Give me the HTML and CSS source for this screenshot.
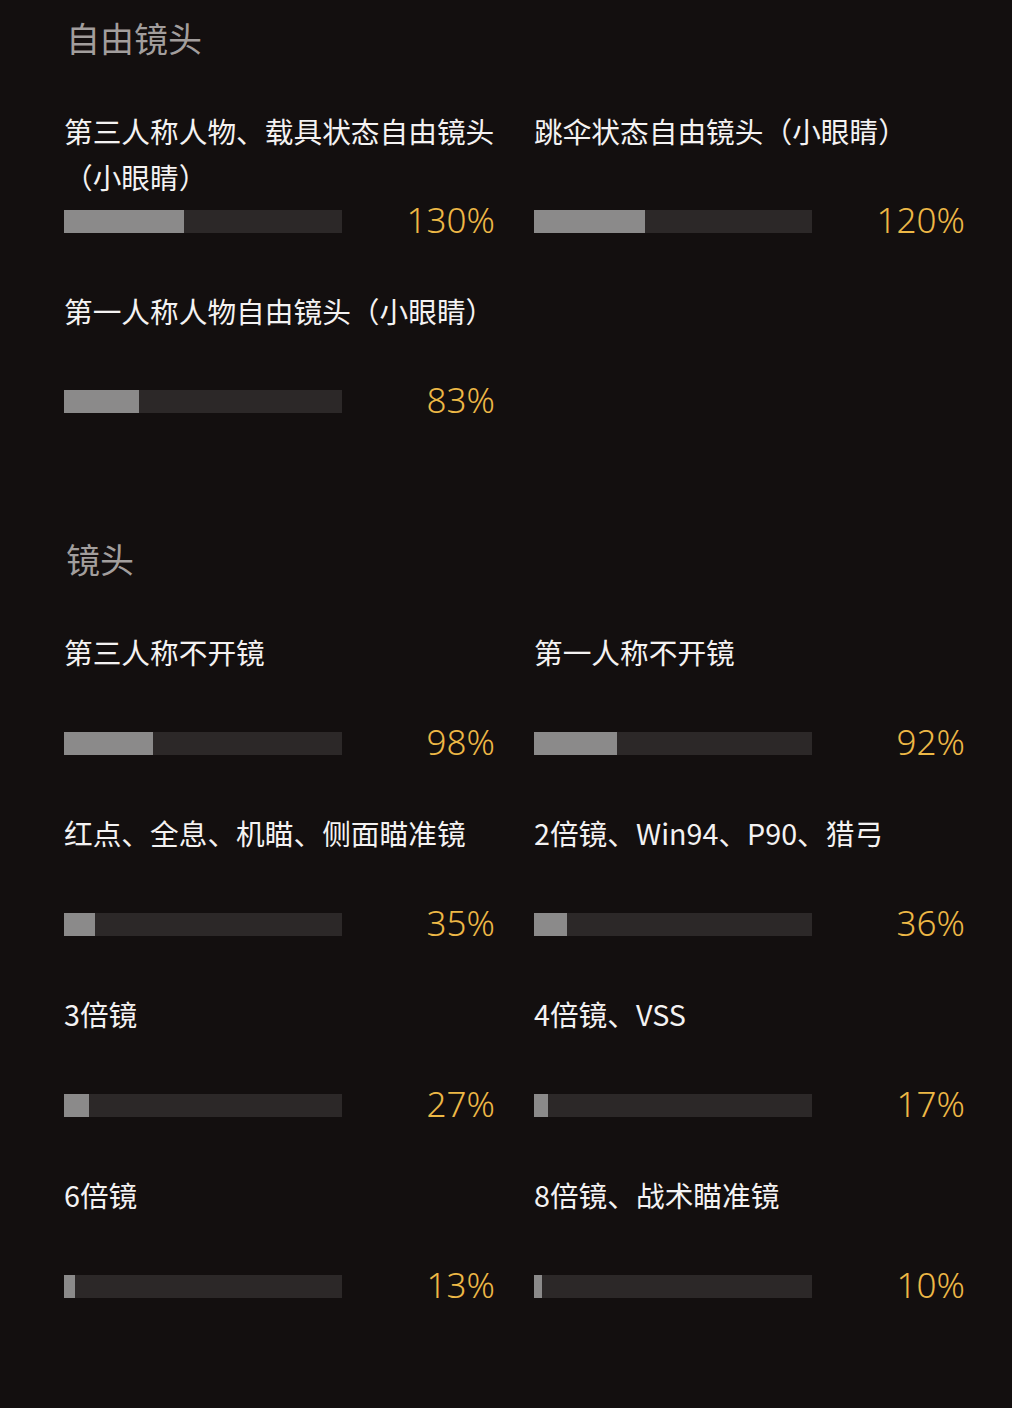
FILE: index.html
```html
<!DOCTYPE html>
<html lang="zh-CN">
<head>
<meta charset="utf-8">
<title>灵敏度 - 镜头</title>
<link rel="stylesheet" href="styles.css">
</head>
<body>
<main class="page">
  <section class="group">
    <h2 class="group-title">自由镜头</h2>
    <div class="grid">
      <div class="item">
        <div class="label">第三人称人物、载具状态自由镜头（小眼睛）</div>
        <div class="meter"><div class="track"><div class="fill" style="width:43.3%"></div></div><span class="value">130%</span></div>
      </div>
      <div class="item">
        <div class="label">跳伞状态自由镜头（小眼睛）</div>
        <div class="meter"><div class="track"><div class="fill" style="width:40%"></div></div><span class="value">120%</span></div>
      </div>
      <div class="item">
        <div class="label">第一人称人物自由镜头（小眼睛）</div>
        <div class="meter"><div class="track"><div class="fill" style="width:27%"></div></div><span class="value">83%</span></div>
      </div>
    </div>
  </section>

  <section class="group group-next">
    <h2 class="group-title">镜头</h2>
    <div class="grid">
      <div class="item">
        <div class="label">第三人称不开镜</div>
        <div class="meter"><div class="track"><div class="fill" style="width:32%"></div></div><span class="value">98%</span></div>
      </div>
      <div class="item">
        <div class="label">第一人称不开镜</div>
        <div class="meter"><div class="track"><div class="fill" style="width:30%"></div></div><span class="value">92%</span></div>
      </div>
      <div class="item">
        <div class="label">红点、全息、机瞄、侧面瞄准镜</div>
        <div class="meter"><div class="track"><div class="fill" style="width:11.2%"></div></div><span class="value">35%</span></div>
      </div>
      <div class="item">
        <div class="label">2倍镜、Win94、P90、猎弓</div>
        <div class="meter"><div class="track"><div class="fill" style="width:12%"></div></div><span class="value">36%</span></div>
      </div>
      <div class="item">
        <div class="label">3倍镜</div>
        <div class="meter"><div class="track"><div class="fill" style="width:9%"></div></div><span class="value">27%</span></div>
      </div>
      <div class="item">
        <div class="label">4倍镜、VSS</div>
        <div class="meter"><div class="track"><div class="fill" style="width:5%"></div></div><span class="value">17%</span></div>
      </div>
      <div class="item">
        <div class="label">6倍镜</div>
        <div class="meter"><div class="track"><div class="fill" style="width:4%"></div></div><span class="value">13%</span></div>
      </div>
      <div class="item">
        <div class="label">8倍镜、战术瞄准镜</div>
        <div class="meter"><div class="track"><div class="fill" style="width:3%"></div></div><span class="value">10%</span></div>
      </div>
    </div>
  </section>
</main>
</body>
</html>
```

FILE: styles.css
```css
html, body {
  margin: 0;
  padding: 0;
  background: #130f0f;
}

body {
  font-family: "Noto Sans CJK SC", "Noto Sans", sans-serif;
  color: #f2f0f0;
}

.page {
  width: 901px;
  padding: 15px 0 80px 64px;
}

.group-title {
  margin: 0 0 47px 2px;
  font-size: 34px;
  line-height: 46px;
  font-weight: 400;
  color: #a29e9d;
}

.group-next {
  margin-top: 123px;
}

.grid {
  display: grid;
  grid-template-columns: 431px 431px;
  column-gap: 39px;
  row-gap: 55px;
}

.item {
  display: flex;
  flex-direction: column;
}

.label {
  height: 92px;
  font-size: 28.7px;
  line-height: 46px;
  color: #f4f2f2;
  margin-bottom: 10px;
}

.group-next .label {
  margin-bottom: 11px;
}

.meter {
  display: flex;
  align-items: center;
  justify-content: space-between;
  height: 23px;
}

.track {
  width: 278px;
  height: 23px;
  background: #2c2828;
  display: flex;
}

.fill {
  height: 100%;
  background: #8b8a8a;
}

.value {
  font-family: "Noto Sans", sans-serif;
  font-weight: 300;
  font-size: 35px;
  line-height: 23px;
  padding-bottom: 4px;
  color: #edb846;
}
```
